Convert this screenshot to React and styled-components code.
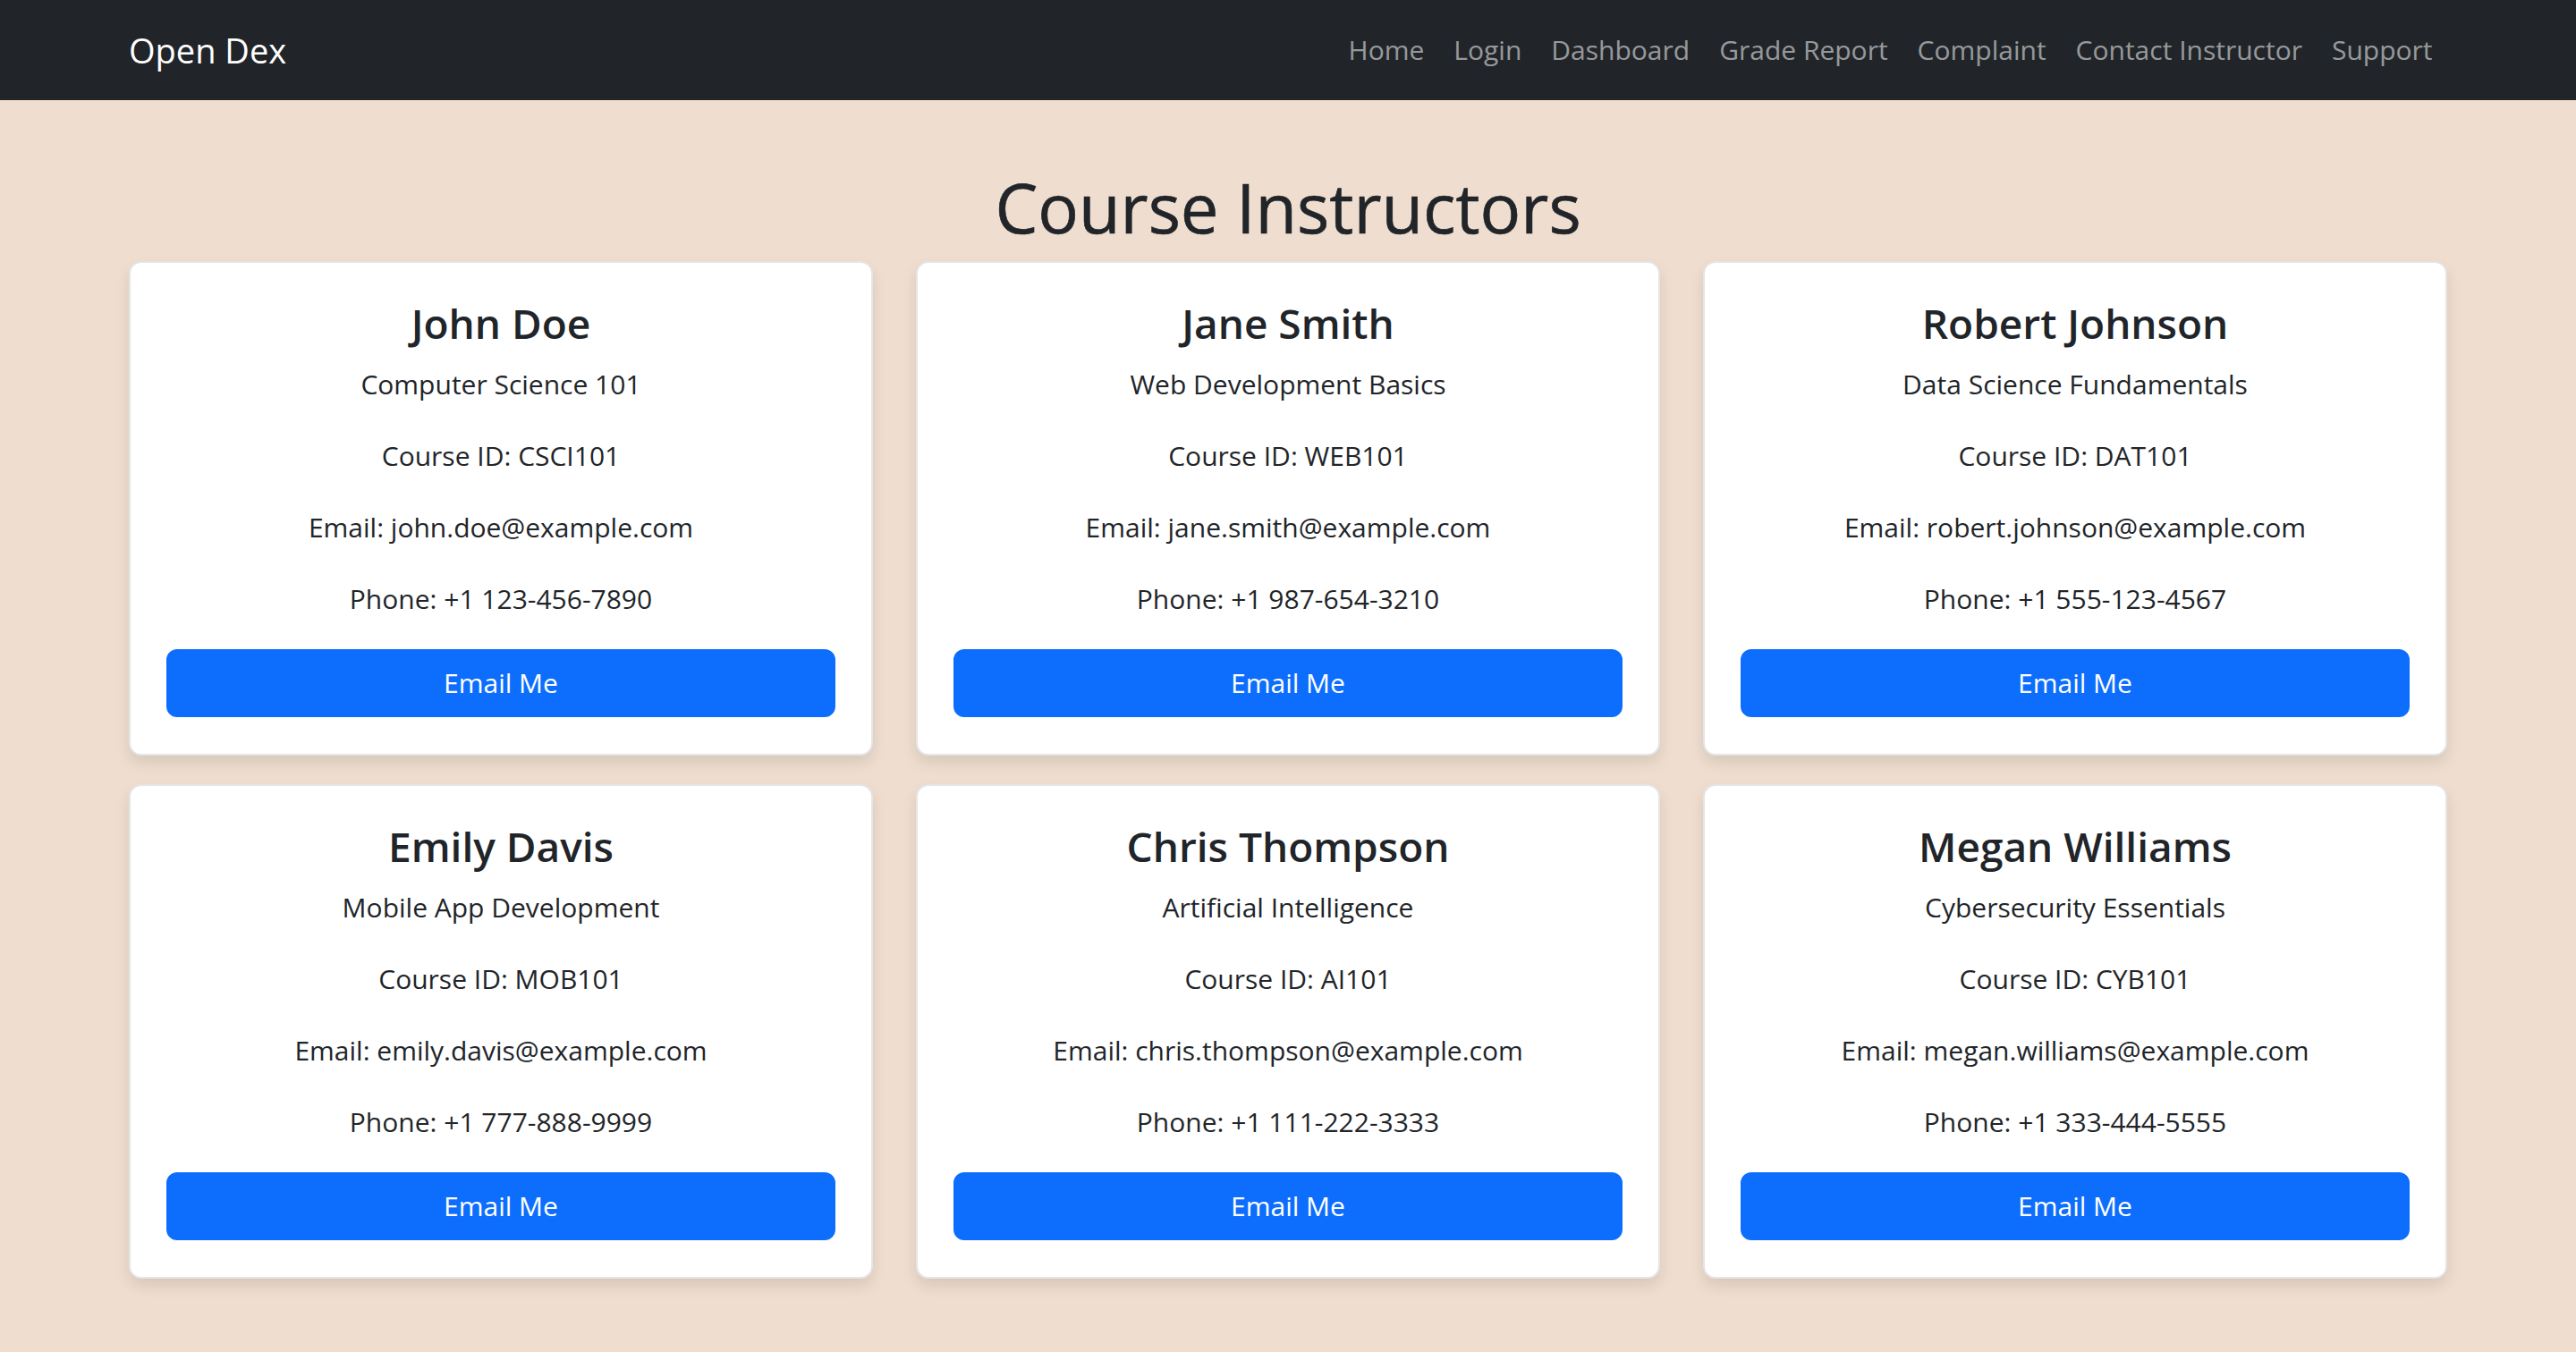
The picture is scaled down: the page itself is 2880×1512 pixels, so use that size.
import React from 'react';
import styled, { createGlobalStyle } from 'styled-components';

const GlobalStyle = createGlobalStyle`
  *, *::before, *::after {
    box-sizing: border-box;
  }

  html, body {
    margin: 0;
    padding: 0;
    min-height: 100%;
  }

  body {
    background: #efdecf;
    color: #212529;
    font-family: "Open Sans", "Noto Sans", Arial, sans-serif;
    font-size: 30px;
    line-height: 48px;
    min-height: 100vh;
  }
`;

const Navbar = styled.nav`
  background: #212529;
  height: 112px;
  padding: 16px 0;
`;

const NavContainer = styled.div`
  max-width: 2640px;
  margin: 0 auto;
  padding: 0 24px;
  height: 100%;
  display: flex;
  align-items: center;
  justify-content: space-between;
`;

const Brand = styled.a`
  color: #fff;
  font-size: 38px;
  line-height: 60px;
  padding: 10px 0;
  text-decoration: none;
`;

const NavLinks = styled.ul`
  list-style: none;
  display: flex;
  margin: 0;
  padding: 0;
`;

const NavLink = styled.a`
  display: block;
  padding: 16px 16.5px;
  color: rgba(255, 255, 255, 0.55);
  font-size: 30px;
  line-height: 48px;
  text-decoration: none;
`;

const Main = styled.main`
  max-width: 2640px;
  margin: 0 auto;
  padding: 72px 24px 80px;
`;

const Title = styled.h1`
  margin: 0 0 12px;
  text-align: center;
  font-size: 76px;
  font-weight: 500;
  line-height: 96px;
  color: #212529;
  -webkit-text-stroke: 0.6px #212529;
`;

const CardGrid = styled.div`
  display: grid;
  grid-template-columns: repeat(3, 1fr);
  gap: 32px 48px;
`;

const Card = styled.div`
  background: #fff;
  border: 2px solid rgba(0, 0, 0, 0.1);
  border-radius: 14px;
  box-shadow: 0 8px 16px rgba(0, 0, 0, 0.1);
  padding: 39px 40px 41px;
  text-align: center;
`;

const Name = styled.h4`
  margin: 0 0 16px;
  font-size: 46px;
  font-weight: 600;
  line-height: 57px;
`;

const Info = styled.p`
  margin: 0 0 32px;
  font-size: 30px;
  line-height: 48px;
`;

const EmailButton = styled.a`
  display: block;
  width: 100%;
  padding: 12px 24px;
  border: 2px solid #0d6efd;
  border-radius: 12px;
  background: #0d6efd;
  color: #fff;
  font-size: 30px;
  line-height: 48px;
  text-align: center;
  text-decoration: none;
`;

const links = ['Home', 'Login', 'Dashboard', 'Grade Report', 'Complaint', 'Contact Instructor', 'Support'];

const instructors = [
  { name: 'John Doe', course: 'Computer Science 101', id: 'CSCI101', email: 'john.doe@example.com', phone: '+1 123-456-7890' },
  { name: 'Jane Smith', course: 'Web Development Basics', id: 'WEB101', email: 'jane.smith@example.com', phone: '+1 987-654-3210' },
  { name: 'Robert Johnson', course: 'Data Science Fundamentals', id: 'DAT101', email: 'robert.johnson@example.com', phone: '+1 555-123-4567' },
  { name: 'Emily Davis', course: 'Mobile App Development', id: 'MOB101', email: 'emily.davis@example.com', phone: '+1 777-888-9999' },
  { name: 'Chris Thompson', course: 'Artificial Intelligence', id: 'AI101', email: 'chris.thompson@example.com', phone: '+1 111-222-3333' },
  { name: 'Megan Williams', course: 'Cybersecurity Essentials', id: 'CYB101', email: 'megan.williams@example.com', phone: '+1 333-444-5555' }
];

const App = () => {
  return (
    <>
      <GlobalStyle />
      <Navbar>
        <NavContainer>
          <Brand href="#">Open Dex</Brand>
          <NavLinks>
            {links.map((link) => (
              <li key={link}>
                <NavLink href="#">{link}</NavLink>
              </li>
            ))}
          </NavLinks>
        </NavContainer>
      </Navbar>

      <Main>
        <Title>Course Instructors</Title>
        <CardGrid>
          {instructors.map((item) => (
            <Card key={item.id}>
              <Name>{item.name}</Name>
              <Info>{item.course}</Info>
              <Info>Course ID: {item.id}</Info>
              <Info>Email: {item.email}</Info>
              <Info>Phone: {item.phone}</Info>
              <EmailButton href={`mailto:${item.email}`}>Email Me</EmailButton>
            </Card>
          ))}
        </CardGrid>
      </Main>
    </>
  );
};

export default App;
